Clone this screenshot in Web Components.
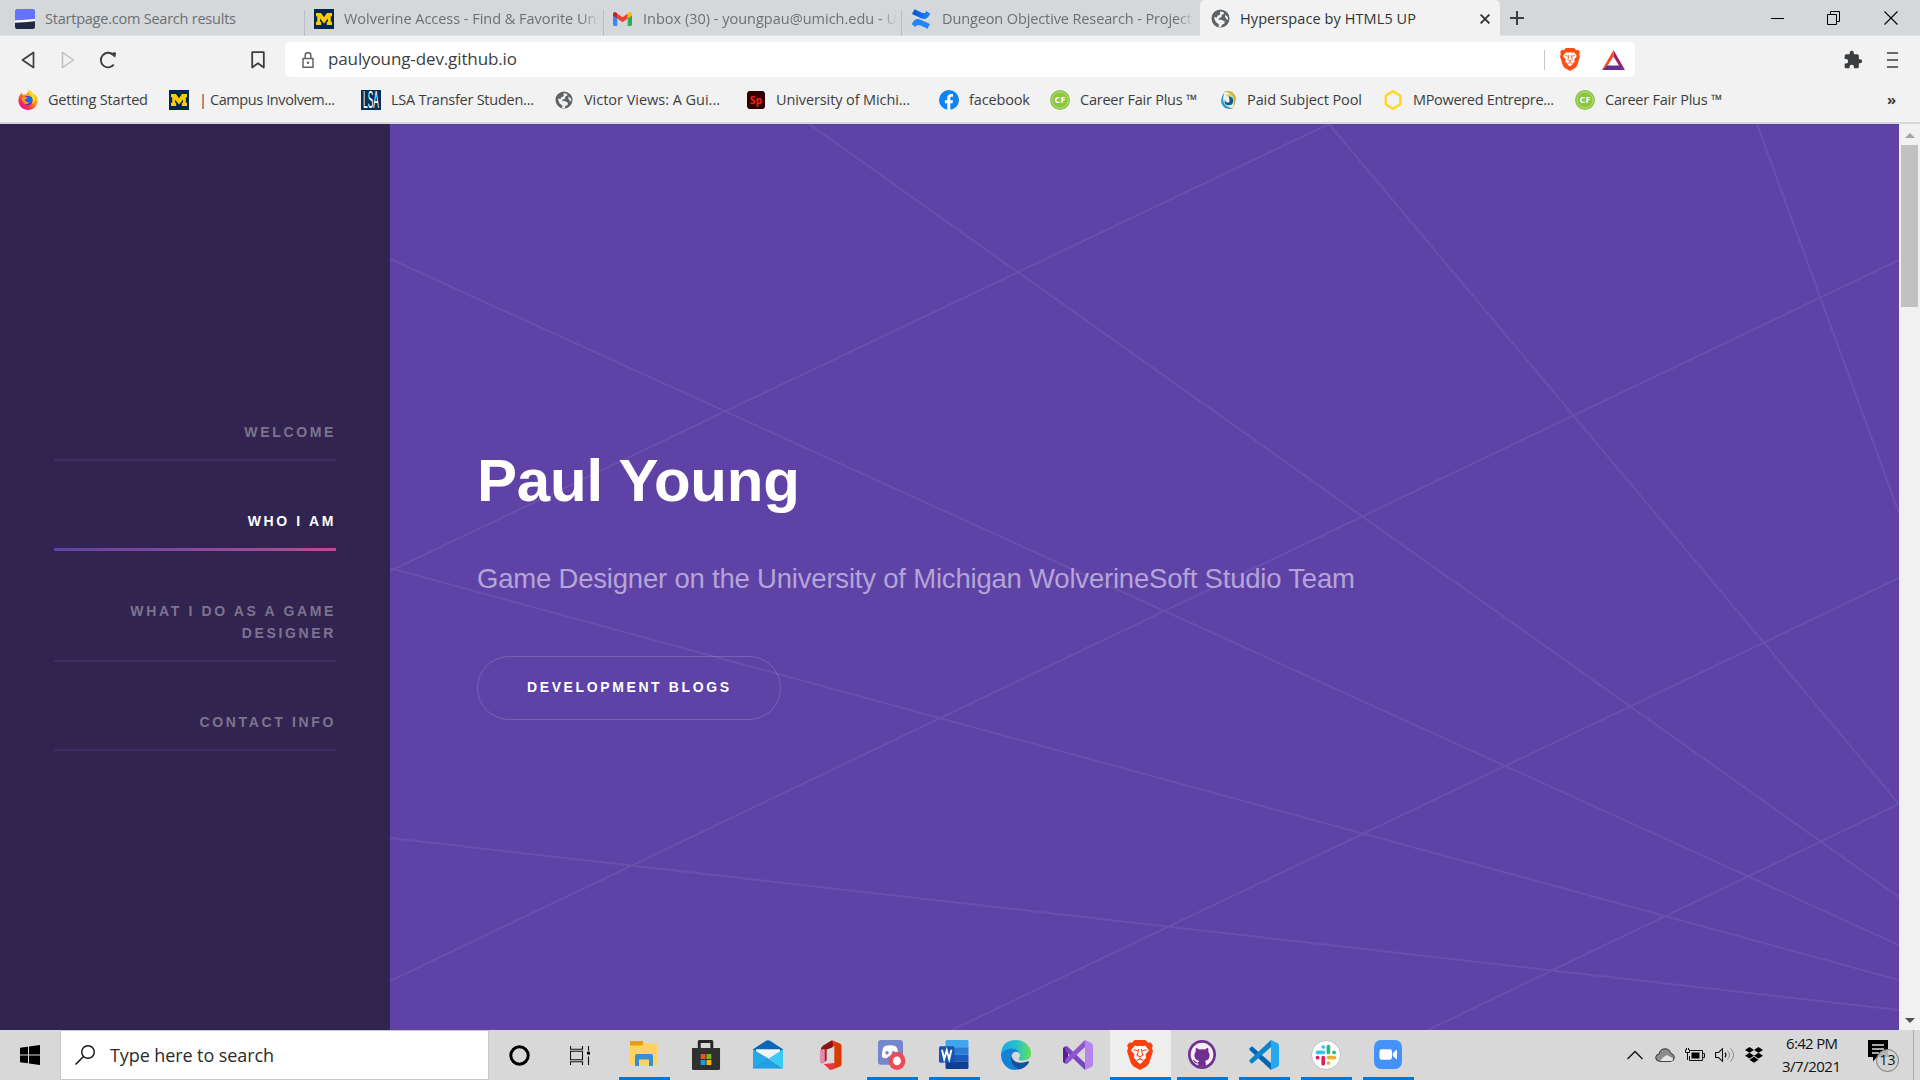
<!DOCTYPE html>
<html lang="en">
<head>
<meta charset="utf-8">
<title>Hyperspace by HTML5 UP</title>
<style>
html,body{margin:0;height:100%;overflow:hidden;background:#f2f2f2}
body{font-family:"Open Sans","Noto Sans",sans-serif}
</style>
</head>
<body>
<desktop-screen></desktop-screen>
<script>
const lion = (fill, bg) => `<path fill="${fill}" d="M7 0h10l2.500 2.800 2.400-.4 2 3.200-.9 2.500 1 3.100-3.600 12.100-2.100 2.900L12 30l-6.300-3.800-2.100-2.900L0 11.200l1-3.100-.9-2.500 2-3.200 2.400.4z"/><path fill="${bg}" d="M7.300 5.600l2.500.6 2.200-.5 2.200.5 2.500-.6 3.600 4.700-3.200 4.300.5 3.500-2.200 1.800-.6 1.700L12 24l-2.800-2.400-.6-1.700-2.200-1.800.5-3.500-3.200-4.300z"/><path fill="none" stroke="${fill}" stroke-width="1" d="M6 9.800l3.800 1M18 9.800l-3.800 1M10.600 9l-.5 4.200-1 1.700 2.900 1.900 2.900-1.900-1-1.700-.5-4.200M12 16.800v1.700M9.300 20.300l2.700-1.500 2.700 1.500"/>`;
const blockM = `<rect width="20" height="20" fill="#00274c"/><path fill="#ffcb05" d="M2 4h5l3 4.2L13 4h5v3.2h-1.2v5.6H18V16h-5.2v-3.2H14V9.4l-4 5.2-4-5.2v3.4h1.2V16H2v-3.2h1.200V7.200H2z"/>`;
const globe = `<circle cx="10" cy="10" r="9.500" fill="#5f6368"/><path fill="#f2f2f2" d="M9.500 2.500l3.500.600 1 1.600-2.600 1.600-.400 2.200-2.600 1.200-.400 1.700 3-.2 3.500 2-.5 2.400-2.500 1-.8 2.200-2.700.2.200-3-3-2-1.700-3.800.2-2.100L6 9.200l1-2.200 2.700-1.200zM15 6l2.800 2.600.2 3-1.700-.8-1.600-3z"/>`;
const cf = `<circle cx="10" cy="10" r="10" fill="#8cc63f"/><circle cx="10" cy="10" r="8" fill="none" stroke="#c9e5a3" stroke-width=".7"/><text x="10" y="13.300" font-family="Open Sans" font-weight="700" font-size="9" fill="#fff" text-anchor="middle" textLength="11">CF</text>`;
const ICONS = {
 start:['0 0 20 20',`<path fill="#6573ff" d="M2 0h16a2 2 0 0 1 2 2v9Q9 11.200 0 12V2a2 2 0 0 1 2-2z"/><path fill="#fff" d="M0 11.500L20 10v2.200L0 13.700z"/><path fill="#202945" d="M0 13.700q10-.2 20-1.500V18a2 2 0 0 1-2 2H2a2 2 0 0 1-2-2z"/>`],
 m:['0 0 20 20',blockM],
 gmail:['0 0 20 15',`<path fill="#4285f4" d="M0 3l4.500 3V15H1.500A1.500 1.500 0 0 1 0 13.500z"/><path fill="#34a853" d="M20 3l-4.500 3V15h3a1.500 1.500 0 0 0 1.500-1.500z"/><path fill="#ea4335" d="M4.500 7V1.500L10 5.600l5.500-4.100V7L10 11z"/><path fill="#c5221f" d="M0 2.200C0 .3 2.200-.6 3.700.8l.8.700V7L0 3.700z"/><path fill="#fbbc04" d="M20 2.200C20 .3 17.800-.6 16.300.8l-.8.700V7L20 3.700z"/>`],
 conf:['0 0 20 20',`<defs><linearGradient id="g"><stop stop-color="#0052cc"/><stop offset="1" stop-color="#2684ff"/></linearGradient></defs><path fill="#2684ff" d="M.6 15.200l1.100-1.800c2.700-4.300 5.500-4 10.300-1.700l7 3.200-2.500 4.900-7-3.200c-2.600-1.200-3.600-.9-4.900 1.500z"/><path fill="url(#g)" d="M19.400 4.800l-1.100 1.800C15.600 10.900 12.800 10.600 8 8.300L1 5.100 3.500.2l7 3.200c2.600 1.200 3.600.9 4.900-1.500z"/>`],
 globe:['0 0 20 20',globe],
 close:['0 0 10 10','<path d="M.6.600l8.800 8.800M9.400.600L.6 9.400" stroke="#303235" stroke-width="1.900"/>'],
 plus:['0 0 14 14','<path d="M7 0v14M0 7h14" stroke="#3c3f42" stroke-width="2"/>'],
 min:['0 0 14 14','<path d="M0 7.500h13" stroke="#000"/>'],
 restore:['0 0 14 14','<path d="M.5 3.500h9v10h-9zM3.500 3V.500h9v10H10" fill="none" stroke="#000"/>'],
 x:['0 0 14 14','<path d="M.5.500l13 13M13.500.500l-13 13" stroke="#000" stroke-width="1.100"/>'],
 back:['0 0 14 18','<path d="M12.500 1.500v15L1.500 9z" fill="none" stroke="#3b3e41" stroke-width="1.700" stroke-linejoin="round"/>'],
 fwd:['0 0 14 18','<path d="M1.500 1.500v15l11-7.500z" fill="none" stroke="#bdbfc1" stroke-width="1.500" stroke-linejoin="round"/>'],
 reload:['0 0 18 18','<path d="M14.800 13.700A7.300 7.300 0 1 1 14 3.600" fill="none" stroke="#3b3e41" stroke-width="1.900"/><path d="M10.800 2.200l5-.9q1.300 0 1.200 1.200l-.8 4.200z" fill="#3b3e41"/>'],
 mark:['0 0 14 18','<path d="M1.200 1.200h11.600v15.300L7 12.200l-5.800 4.300z" fill="none" stroke="#3b3e41" stroke-width="1.800" stroke-linejoin="round"/>'],
 lock:['0 0 12 16','<path d="M1 6.500h10v8.700H1zM3.200 6V3.500a2.800 2.800 0 0 1 5.600 0V6" fill="none" stroke="#5f6368" stroke-width="1.500" stroke-linejoin="round"/><circle cx="6" cy="10.700" r="1.200" fill="#5f6368"/>'],
 brave:['0 0 24 30',lion('#fb4f14','#fff')],
 bat:['0 0 24 20','<path fill="#ff4724" d="M12 0v6.500L5.500 16 0 20z"/><path fill="#9e1f63" d="M12 0l12 20-6-4-6-9.500z"/><path fill="#662d91" d="M0 20l5.500-4.500h13L24 20z"/>'],
 puzzle:['0 0 24 24','<path fill="#3b3e41" d="M20.500 11H19V7a2 2 0 0 0-2-2h-4V3.500a2.500 2.500 0 0 0-5 0V5H4a2 2 0 0 0-2 2v3.800h1.500a2.700 2.700 0 0 1 0 5.400H2V20c0 1.100.9 2 2 2h3.800v-1.500a2.700 2.700 0 0 1 5.400 0V22H17a2 2 0 0 0 2-2v-4h1.500a2.500 2.500 0 0 0 0-5z"/>'],
 menu:['0 0 12 18','<path d="M0 2h11M0 9h11M0 16h11" stroke="#3b3e41" stroke-width="1.700"/>'],
 firefox:['0 0 20 20','<defs><linearGradient id="f" x1=".9" y1=".1" x2=".2" y2=".9"><stop stop-color="#ffe226"/><stop offset=".45" stop-color="#ff8a16"/><stop offset=".75" stop-color="#ff3647"/><stop offset="1" stop-color="#e31587"/></linearGradient></defs><path fill="url(#f)" d="M11 0c3 1.500 4 3.500 4.500 5l.7-1.500C18.500 5.500 20 8.500 19.500 12c-.7 4.700-4.600 8-9.500 8S1 16.300.5 11.500C.2 8 1.500 4.500 4 2.500L4.500 5 8 4.500z"/><circle cx="9.800" cy="10.700" r="4.800" fill="#5c2fc2"/><circle cx="11" cy="9.800" r="3.300" fill="#0f6df5"/><path fill="#ff9418" d="M3 8.500Q6 5.500 9.500 8L6.800 9.800 8.500 12l3 .2Q9.500 15 6.500 14z"/><path fill="#ffdb2b" d="M11 0c-1 3 1 4.500 3 7 1.500 2 1.500 5-.5 7 4-1.200 4.500-7 2-10z"/>'],
 lsa:['0 0 20 20','<rect width="20" height="20" fill="#00315c"/><text x="2" y="8.850" font-family="Liberation Sans" font-size="11.500" fill="#fff" textLength="16" lengthAdjust="spacingAndGlyphs" transform="scale(1 2)">LSA</text>'],
 sp:['0 0 18 18','<rect width="18" height="18" rx="3" fill="#300000"/><text x="9" y="12.800" font-family="Open Sans" font-weight="700" font-size="10.500" fill="#ff1d12" text-anchor="middle">Sp</text>'],
 fb:['0 0 20 20','<circle cx="10" cy="10" r="10" fill="#0c84f5"/><path fill="#fff" d="M8.300 20v-6.800H5.900v-3h2.400V8c0-2.600 1.400-3.900 3.700-3.900 1 0 2 .2 2 .2v2.500h-1.300c-1.200 0-1.400.7-1.400 1.500v1.900h2.700l-.5 3h-2.200V20z"/>'],
 cf:['0 0 20 20',cf],
 paid:['0 0 20 20','<path fill="#c4b839" d="M4 2Q14-1 18 6q2.500 6-3.500 12Q18 10 14.500 6 11 1.500 4 2z"/><path fill="#2e9bbf" d="M16 18Q6 21 2 14-.500 8 5.500 2 2 10 5.500 14q3.500 4 10.500 4z"/><path fill="#0b5c94" d="M10 6q6-1 5.500 5.500-1 5-7.500 3.500-4-1.500-2-6 0 4 4 3.500 2.500-1 0-6.500z"/><path fill="#d5d079" d="M7 5q6-3.500 8.500 4-4-4-7.500-2z"/>'],
 hex:['0 0 20 20','<path d="M10 1.300l7.300 4.400v8.600L10 18.700l-7.300-4.400V5.700z" fill="none" stroke="#ffd51c" stroke-width="2.200" stroke-linejoin="round"/>'],
 win:['0 0 20 20','<path d="M0 2.800L8 1.700v7.800H0zM9 1.500L20 0v9.500H9zM0 10.500h8v7.800l-8-1.100zM9 10.500h11V20L9 18.500z"/>'],
 search:['0 0 20 20','<circle cx="13" cy="7" r="6.300" fill="none" stroke="#111" stroke-width="1.400"/><path d="M8.500 11.500L.5 19.500" stroke="#111" stroke-width="1.500"/>'],
 cortana:['0 0 20 20','<circle cx="10" cy="10" r="8.300" fill="none" stroke="#000" stroke-width="2.800"/>'],
 task:['0 0 20 20','<path d="M.5 5.500h12v9H.5zM.5 0v3.500h12V0M.5 20v-3.500h12V20M18.500 0v5M18.500 11v9" fill="none" stroke="#111" stroke-width="1.100"/><path d="M17 6h3v3h-3z"/>'],
 folder:['0 0 28 24','<path fill="#e0a011" d="M0 1h13v6H0z"/><path fill="#ffd261" d="M0 5h12l2-2h13.500v20H0z"/><path fill="#388ed5" d="M5 24V15q0-2 2-2h14q2 0 2 2v9h-4v-6H9v6z"/>'],
 store:['0 0 30 30','<path d="M7.500 9V1.500h13V9" fill="none" stroke="#262626" stroke-width="3" stroke-linejoin="round"/><path fill="#303030" d="M0 8h29v20.500a1.500 1.500 0 0 1-1.500 1.500h-26A1.500 1.500 0 0 1 0 28.500z"/><path fill="#f25022" d="M9 14h5v5H9z"/><path fill="#7fba00" d="M15 14h5v5h-5z"/><path fill="#00a4ef" d="M9 20h5v5H9z"/><path fill="#ffb900" d="M15 20h5v5h-5z"/>'],
 mail:['0 0 30 28','<path fill="#0967b5" d="M0 9L13 .8Q15-.5 17 .8L30 9v5H0z"/><path fill="#f5f5f5" d="M3 9h24v6L15 20 3 15z"/><path fill="#25a8e8" d="M0 9l15 9L30 28H0z"/><path fill="#3bc9f5" d="M30 9l-14 9 14 10z"/><path fill="#1691da" d="M0 28l15-10 15 10z" opacity=".35"/>'],
 office:['0 0 24 30','<path fill="#b91521" d="M2 8.500L14 .5 16 6 8 8.500v12l-5 3z"/><path fill="#df8fb0" d="M1 10l5-1v13l-4 1.500Q1 22 1 20z"/><path fill="#d83b01" d="M14 .500L22 3.500Q23.500 4 23.500 6v18q0 2-1.500 2.500L14 29.500l-1-5 3-1V6z"/><path fill="#eb3447" d="M5 24l11-1v5.500l-2 1q-1.500.5-3 0z"/><path fill="#8f1115" d="M2 8.500Q3 6.500 4.500 5.500L13 .500h1v7L8 9.500z"/>'],
 discord:['0 0 28 28','<rect y="0" width="25" height="23" rx="3" fill="#7486cc"/><path fill="#fff" d="M6 6q7-2 12 0 3 4 2.500 10-3 2-5 1l-1-1.500H10L9 17q-3 0-5-1Q3.500 10 6 6z"/><circle cx="9" cy="12" r="1.700" fill="#7486cc"/><circle cx="15.500" cy="12" r="1.700" fill="#7486cc"/><circle cx="19" cy="19.500" r="8.500" fill="#ed4c54"/><circle cx="19" cy="19.500" r="4" fill="#fff"/>'],
 word:['0 0 30 28','<path fill="#41a5ee" d="M8.500 0H28q1.500 0 1.500 1.500V7h-23V1.500Q6.500 0 8.500 0z"/><path fill="#2b7cd3" d="M6.500 7h23v7h-23z"/><path fill="#185abd" d="M6.500 14h23v7h-23z"/><path fill="#103f91" d="M6.500 21h23v5.500Q29.500 28 28 28H8q-1.500 0-1.500-1.500z"/><rect y="6" width="15.500" height="16" rx="1.500" fill="#1853ae"/><path d="M3 9.500l2.200 9L7.700 10l2.500 8.500 2.200-9" fill="none" stroke="#fff" stroke-width="1.900"/>'],
 edge:['0 0 30 30','<defs><linearGradient id="e"><stop stop-color="#1aa7e5"/><stop offset=".55" stop-color="#2bc3c9"/><stop offset="1" stop-color="#64e34a"/></linearGradient></defs><path fill="url(#e)" d="M0 14Q1 0 15 0q9 0 13.500 7.500Q31.500 13 29 17.500q-2.500 3.500-9 3-3-.5-2-2.500 2-2.500 0-5-3-4-8.500-2.500Q3 11 0 17z"/><path fill="#1583d5" d="M0 15.500Q2 9 10 8.500q6-.2 8 4-6-3-8 4.500 0 8 8 12.200Q8 32 2.500 23.500 0 19.500 0 15.500z"/><path fill="#0c549e" d="M10.500 15q-2.500 10 7 14.500 7-1 10.500-7 0-2-2-1-9 3.500-14-2-1.500-2-1.500-4.500z"/>'],
 vs:['0 0 30 30','<path fill="#52218a" d="M0 8l2-1.500 3 2.500v12l-3 2.500L0 22z"/><path fill="#7b45c2" d="M2 6.500L4 6l18 17v7L2.500 11z"/><path fill="#9055d4" d="M2 23.500l2 .5L22 7V0L2.500 19z"/><path fill="#b685ec" d="M22 0l6.500 3Q30 4 30 5.500v19q0 1.500-1.500 2.500L22 30z"/>'],
 lion:['0 0 24 30',lion('#fb4110','#fff')],
 github:['0 0 28 28','<circle cx="14" cy="14" r="14" fill="#70308e"/><circle cx="14" cy="14" r="11.300" fill="#f5edf7"/><path fill="#70308e" d="M8 7.500l3.500 1.700q2.500-.6 5 0L20 7.500q.8 2 .2 3.500 1.800 2 1.300 5-.7 3.500-4.500 4.200.8 1 .8 2.500v2.500Q14 26 10.200 25.200v-2.700q-3 .5-4-1.500-.7-1-1.500-1.500 1.500-.5 2.500 1 1.200 1.600 3.200 1l.7-1.400Q7 19.500 6.500 16q-.5-3 1.300-5-.6-1.500.2-3.500z"/>'],
 code:['0 0 30 30','<path fill="#0067b4" d="M.5 8.200L2.300 6.800q.7-.4 1.300 0L22 23v7l-21.500-20z"/><path fill="#0b83ce" d="M.5 21.800l1.800 1.400q.7.400 1.300 0L22 7V0L.500 20z"/><path fill="#26a9f0" d="M22 0l6.500 3Q30 4 30 5.500v19q0 1.500-1.500 2.500L22 30z"/>'],
 slack:['0 0 30 30','<circle cx="15" cy="15" r="14.500" fill="#fff" stroke="#c2c2c2"/><g stroke-width="3.700" stroke-linecap="round"><path stroke="#36c5f0" d="M6.500 12.400h6M12.200 7h.2"/><path stroke="#2eb67d" d="M17.400 6.500v6M23 12.400h.1"/><path stroke="#ecb22e" d="M17.500 17.700h6M17.500 23h.1"/><path stroke="#e01e5a" d="M12.200 17.700v6M6.500 17.700h.1"/></g>'],
 zoom:['0 0 28 28','<rect width="28" height="28" rx="7" fill="#4491fa"/><rect x="5.500" y="9" width="12.500" height="10" rx="2" fill="#fff"/><path fill="#fff" d="M18.800 12.500L23 9.200v9.600l-4.200-3.300z"/>'],
 chev:['0 0 16 10','<path d="M.5 9L8 1.500 15.500 9" fill="none" stroke="#111" stroke-width="1.400"/>'],
 cloud:['0 0 20 14','<path fill="#8d8d8d" stroke="#333" d="M4.500 13.400Q.7 13 .7 9.500.8 6.500 4 6q1-5 6-5.200 4.500 0 6 4.700 3.300.7 3.300 4 0 3.500-3.800 3.900z"/><path fill="#e7e7e7" d="M5 12.900l3-3.500 4-2.500 6 3.500q.5 2-2.300 2.500z"/>'],
 battery:['0 0 20 14','<path d="M4.500 2.500h13v10h-13V8M18 5.500h1.500v4H18M.5 1.500v3h4v-3M1.500 0v2M3.500 0v2M2.500 5v7" fill="none" stroke="#111"/><path d="M6.500 4.500h8v6h-8z"/>'],
 sound:['0 0 20 16','<path d="M.6 5.500h3L7.500 1.700v12.600l-3.900-3.800h-3z" fill="none" stroke="#111" stroke-width="1.100"/><path d="M10 5.700q1.800 2.300 0 4.600" fill="none" stroke="#111" stroke-width="1.200"/><path d="M12.500 3.500q4 4.500 0 9M15.500 1.200q6 6.800 0 13.600" fill="none" stroke="#888"/>'],
 dropbox:['0 0 18 16','<path d="M4.500 0L9 2.900 4.500 5.800 0 2.900zM13.500 0L18 2.900l-4.500 2.900L9 2.900zM4.500 5.800L9 8.700l-4.500 2.900L0 8.700zM13.500 5.800L18 8.700l-4.500 2.900L9 8.700zM4.500 12.700L9 9.800l4.500 2.900L9 15.700z"/>'],
 note:['0 0 20 22','<path d="M0 0h20v17H9l-4 4.500V17H0z"/><path d="M4 5h12M4 9h12M4 13h7" stroke="#ddd" stroke-width="1.300"/>'],
};
class Base extends HTMLElement{
  constructor(){super();this.attachShadow({mode:'open'});}
  paint(css,html){this.shadowRoot.innerHTML=`<style>*{box-sizing:border-box}${css}</style>${html}`;}
}
/* Inline SVG by name, sized in pixels; "gap" is the space before it. */
customElements.define('app-icon',class extends Base{
  connectedCallback(){
    const [vb,body]=ICONS[this.getAttribute('name')];
    this.paint(`:host{display:block;flex:none;width:${this.getAttribute('w')}px;height:${this.getAttribute('h')}px;margin-left:${this.getAttribute('gap')||0}px}svg{display:block;width:100%;height:100%}`,
    `<svg viewBox="${vb}" preserveAspectRatio="none">${body}</svg>`);
  }
});
/* One line of text whose tracking is adjusted so that it fills "w" pixels. */
customElements.define('fit-text',class extends Base{
  connectedCallback(){
    const w=+this.getAttribute('w'),clip=this.getAttribute('clip');
    this.paint(`:host{display:block;flex:none;width:${clip||w}px;margin-left:${this.getAttribute('gap')||0}px;white-space:pre}span{display:inline-block;letter-spacing:var(--ls,0)}
    div{width:100%;${clip?'overflow:hidden;-webkit-mask:linear-gradient(90deg,#000 93%,transparent);mask:linear-gradient(90deg,#000 93%,transparent)':''}}`,`<div><span><slot></slot></span></div>`);
    const s=this.shadowRoot.querySelector('span'),n=this.textContent.length;
    s.style.setProperty('--ls',((w-s.getBoundingClientRect().width)/(n-1)).toFixed(3)+'px');
  }
});
customElements.define('tab-strip',class extends Base{
  connectedCallback(){
    const tab=(c,w,p,ic,iw,ih,g,t)=>`<div class="tab ${c}" style="width:${w}px;padding-left:${p}px"><app-icon name="${ic}" w="${iw}" h="${ih}"></app-icon>${t}</div>`;
    this.paint(`:host{display:flex;height:36px;background:#d4d8db;border-bottom:1px solid #e0e2e4;font-size:14.500px;color:#6c6f73;align-items:center}
    .tab{display:flex;align-items:center;height:36px;padding-top:2px;flex:none}.sep{border-right:1.500px solid #b9bdc1;height:26px;margin-top:10px;padding:0 0 8px}
    .on{background:#f2f2f2;border-radius:5px 5px 0 0;color:#303235}
    `,
    tab('sep',305,15,'start',20,20,10,'<fit-text w="191" gap="10">Startpage.com Search results</fit-text>')+
    tab('sep',299,9,'m',20,20,10,'<fit-text w="256" clip="255" gap="10">Wolverine Access - Find &amp; Favorite Uni</fit-text>')+
    tab('sep',298,9,'gmail',19,14,10,'<fit-text w="254" clip="254" gap="11">Inbox (30) - youngpau@umich.edu - U</fit-text>')+
    tab('',298,9,'conf',20,20,10,'<fit-text w="250" clip="252" gap="11">Dungeon Objective Research - Project</fit-text>')+
    tab('on',300,11,'globe',19,19,10,'<fit-text w="176" gap="10">Hyperspace by HTML5 UP</fit-text><app-icon name="close" w="10" h="10" gap="64"></app-icon>')+
    `<app-icon name="plus" w="14" h="14" gap="10"></app-icon><app-icon name="min" w="14" h="14" gap="247"></app-icon><app-icon name="restore" w="14" h="14" gap="42"></app-icon><app-icon name="x" w="14" h="14" gap="43"></app-icon>`);
  }
});
customElements.define('tool-bar',class extends Base{
  connectedCallback(){
    this.paint(`:host{display:flex;height:47px;align-items:center;background:#f2f2f2;color:#3b3e41;font-size:17px}
    .url{display:flex;align-items:center;width:1350px;height:35px;margin-left:20px;background:#fff;border-radius:5px}
    .url fit-text{margin-top:-2px}
    .url i{width:1px;height:20px;background:#c5c7c9;margin-left:1027px}`,
    `<app-icon name="back" w="14" h="18" gap="21"></app-icon><app-icon name="fwd" w="14" h="18" gap="26"></app-icon><app-icon name="reload" w="18" h="18" gap="24"></app-icon><app-icon name="mark" w="14" h="18" gap="134"></app-icon>
    <div class="url"><app-icon name="lock" w="12" h="16" gap="17"></app-icon><fit-text w="189" gap="14">paulyoung-dev.github.io</fit-text><i></i><app-icon name="brave" w="20" h="23" gap="15"></app-icon><app-icon name="bat" w="23" h="20" gap="22"></app-icon></div>
    <app-icon name="puzzle" w="20" h="20" gap="208"></app-icon><app-icon name="menu" w="12" h="18" gap="24"></app-icon>`);
  }
});
customElements.define('bookmark-bar',class extends Base{
  connectedCallback(){
    const list=[['firefox',18,20,20,48,100,'Getting Started'],['m',169,20,20,199,136,'| Campus Involvem...'],['lsa',361,20,20,391,143,'LSA Transfer Studen...'],['globe',555,18,18,584,136,'Victor Views: A Gui...'],['sp',747,18,18,776,134,'University of Michi...'],['fb',939,20,20,969,61,'facebook'],['cf',1050,20,20,1080,117,'Career Fair Plus ™'],['paid',1220,17,20,1247,115,'Paid Subject Pool'],['hex',1383,20,20,1413,141,'MPowered Entrepre...'],['cf',1575,20,20,1605,117,'Career Fair Plus ™']];
    let end=0,html='';
    for(const [n,x,w,h,tx,tw,t] of list){html+=`<app-icon name="${n}" w="${w}" h="${h}" gap="${x-end}"></app-icon><fit-text w="${tw}" gap="${tx-x-w}">${t}</fit-text>`;end=tx+tw;}
    this.paint(`:host{display:flex;height:41px;align-items:center;padding-bottom:5px;background:#f2f2f2;border-bottom:2px solid #d5d8db;color:#3b3e41;font-size:14.500px}fit-text{margin-top:-2px}b{margin-left:165px;font-size:15px;line-height:18px;margin-top:-3px}`,html+'<b>»</b>');
  }
});
customElements.define('nav-item',class extends Base{
  connectedCallback(){
    this.paint(`:host{display:block;padding-bottom:16px;border-bottom:2px solid #3c2d62;margin-bottom:49.400px;color:#7c748e;text-align:right;font:bold 14px/22px "Liberation Sans",sans-serif;letter-spacing:2.650px}
    :host([active]){color:#fff;border-bottom:3px solid;border-image:linear-gradient(90deg,#5e42a6,#b74e91) 1;margin-bottom:48.400px}`,'<slot></slot>');
  }
});
customElements.define('side-nav',class extends Base{
  connectedCallback(){
    this.paint(`:host{display:block;width:390px;flex:none;background:#312450;padding:297px 54px 0}`,
    `<nav><nav-item>WELCOME</nav-item><nav-item active>WHO I AM</nav-item><nav-item>WHAT I DO AS A GAME DESIGNER</nav-item><nav-item>CONTACT INFO</nav-item></nav>`);
  }
});
customElements.define('hero-section',class extends Base{
  connectedCallback(){
    this.paint(`:host{display:grid;width:1509px;height:906px;flex:none;background:#5e42a6;font-family:"Liberation Sans",sans-serif;color:#fff}
    svg,.copy{grid-area:1/1}.copy{padding:322px 0 0 87px}
    h1{font-size:60px;line-height:70px;margin:0}p{font-size:27.500px;line-height:40px;color:#b4a5d6;margin:43px 0 0}
    a{display:flex;width:304px;height:64px;margin-top:57px;border:1px solid rgba(255,255,255,.17);border-radius:32px;align-items:center;padding:0 0 2px 49px;font:bold 14px "Liberation Sans",sans-serif}`,
    `<svg width="1509" height="906" viewBox="390 124 1509 906"><path d="M809 124L1899 897M390 259L1899 945M390 568L1899 980M390 838L1899 1010M390 571L1329 124L1899 804M1757 124L1899 513M1899 260L390 981M1899 578L952 1030M1899 804L1428 1030" fill="none" stroke="#fff" stroke-opacity=".075" stroke-width="2"/></svg>
    <div class="copy"><h1><fit-text w="323">Paul Young</fit-text></h1><p><fit-text w="878">Game Designer on the University of Michigan WolverineSoft Studio Team</fit-text></p><a><fit-text w="202">DEVELOPMENT BLOGS</fit-text></a></div>`);
  }
});
customElements.define('scroll-bar',class extends Base{
  connectedCallback(){
    this.paint(`:host{display:flex;flex-direction:column;width:21px;background:#f1f1f1;align-items:center}
    i{border:5px solid transparent;border-top:0;border-bottom:5px solid #a3a3a3;margin:9px 0 7px}u{width:17px;height:162px;background:#c1c1c1}i.d{border-top:5px solid #505050;border-bottom:0;margin:auto 0 7px}`,`<i></i><u></u><i class="d"></i>`);
  }
});
customElements.define('task-button',class extends Base{
  connectedCallback(){
    this.paint(`:host{display:flex;width:61px;margin-right:1px;height:50px;flex:none;justify-content:center;padding:10px 1px 0 0}
    :host([open]){background:linear-gradient(#0078d7,#0078d7) 50% 100%/51px 3px no-repeat}:host([active]){background:linear-gradient(#0078d7,#0078d7) 50% 100%/61px 3px no-repeat #eee}`,'<slot></slot>');
  }
});
customElements.define('task-bar',class extends Base{
  connectedCallback(){
    const b=(n,w,h,s='')=>`<task-button ${s}><app-icon name="${n}" w="${w}" h="${h}"></app-icon></task-button>`;
    this.paint(`:host{display:flex;height:50px;background:#d8d8d8;color:#111;align-items:center}
    .search{display:flex;align-items:center;width:429px;height:50px;border:1px solid #c8c8c8;background:#fff;margin-left:20px;font-size:18px;color:#2b2b2b}
    .apps{display:flex;margin-left:24px}.time{font-size:15px;line-height:23px;margin-left:19px;width:58px}
    .note{display:grid;margin-left:28px;margin-top:3px;width:31px;height:33px}.note>*{grid-area:1/1}.badge{width:23px;height:23px;border:1.500px solid #777;border-radius:50%;background:rgba(210,210,210,.85);margin:9px 0 0 8px;font-size:14px;line-height:19px;text-align:center}
    .peek{width:1px;height:50px;background:#aaa;margin-left:14px}`,
    `<app-icon name="win" w="20" h="20" gap="20"></app-icon><div class="search"><app-icon name="search" w="20" h="20" gap="14"></app-icon><fit-text w="164" gap="15">Type here to search</fit-text></div>
    <app-icon name="cortana" w="21" h="21" gap="20"></app-icon><app-icon name="task" w="20" h="19" gap="40"></app-icon>
    <div class="apps">${b('folder',28,26,'open')}${b('store',29,30)}${b('mail',30,28.500)}${b('office',23,30)}${b('discord',28,30,'open')}${b('word',30,29,'open')}${b('edge',30,30)}${b('vs',30,30)}${b('lion',26,30,'active')}${b('github',28,29,'open')}${b('code',30,30,'open')}${b('slack',30,30,'open')}${b('zoom',28,29,'open')}</div>
    <app-icon name="chev" w="16" h="10" gap="207"></app-icon><app-icon name="cloud" w="20" h="14" gap="12"></app-icon><app-icon name="battery" w="20" h="14" gap="10"></app-icon><app-icon name="sound" w="20" h="16" gap="10"></app-icon><app-icon name="dropbox" w="18" h="16" gap="10"></app-icon>
    <div class="time"><fit-text w="52" gap="4">6:42 PM</fit-text><fit-text w="59">3/7/2021</fit-text></div>
    <div class="note"><app-icon name="note" w="20" h="22"></app-icon><span class="badge">13</span></div><i class="peek"></i>`);
  }
});
customElements.define('desktop-screen',class extends Base{
  connectedCallback(){
    this.paint(`:host{display:flex;flex-direction:column;width:1920px;height:1080px;overflow:hidden}main{display:flex;height:906px;flex:none}`,
    `<tab-strip></tab-strip><tool-bar></tool-bar><bookmark-bar></bookmark-bar><main><side-nav></side-nav><hero-section></hero-section><scroll-bar></scroll-bar></main><task-bar></task-bar>`);
  }
});
</script>
</body>
</html>
